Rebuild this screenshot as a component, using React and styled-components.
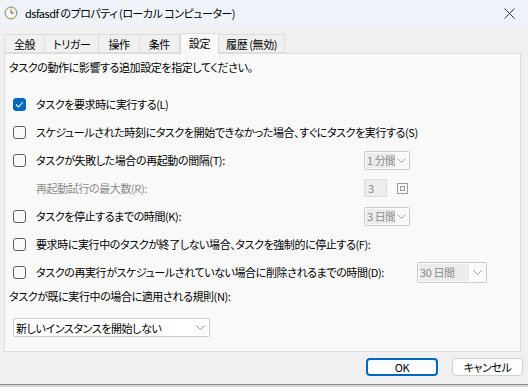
import React from "react";
import styled, { createGlobalStyle } from "styled-components";

const GlobalStyle = createGlobalStyle`
  html, body {
    margin: 0;
    padding: 0;
    background: #d6d6d6;
  }
  body {
    font-family: "Noto Sans CJK JP", "Noto Sans", sans-serif;
    font-size: 11px;
    font-feature-settings: "palt";
    letter-spacing: -0.4px;
    color: #000;
  }
`;

const tabs = ["全般", "トリガー", "操作", "条件", "設定", "履歴 (無効)"];

const Window = styled.div`
  width: 528px;
  height: 384px;
  background: #f0f0f0;
  border-bottom: 1px solid #8c8c8c;
  display: flex;
  flex-direction: column;
  overflow: hidden;
`;

const TitleBar = styled.div`
  height: 26px;
  background: #eef3fa;
  display: flex;
  align-items: center;
  padding-left: 4px;
  font-size: 11px;
`;

const Title = styled.span`
  margin-left: 7px;
  flex: 1;
  white-space: nowrap;
  letter-spacing: -0.5px;
`;

const CloseButton = styled.div`
  width: 30px;
  display: flex;
  justify-content: center;
  margin-right: 4px;
`;

const Tabs = styled.div`
  display: flex;
  align-items: flex-end;
  margin: 7px 0 0 4px;
  height: 20px;
  position: relative;
  z-index: 1;
`;

const Tab = styled.div`
  height: ${(p) => (p.$active ? "21px" : "19px")};
  margin-bottom: ${(p) => (p.$active ? "-1px" : "0")};
  padding: 0 ${(p) => p.$pad}px;
  display: flex;
  align-items: center;
  box-sizing: border-box;
  background: ${(p) => (p.$active ? "#f9f9f9" : "#f0f0f0")};
  border: 1px solid #dddddd;
  border-bottom: ${(p) => (p.$active ? "none" : "1px solid #dddddd")};
  border-left: ${(p) => (p.$first || p.$active ? "1px solid #dddddd" : "none")};
  white-space: nowrap;
  padding-bottom: ${(p) => (p.$active ? "2px" : "0")};
`;

const Panel = styled.div`
  margin: 0 7px 0 4px;
  height: 299px;
  box-sizing: border-box;
  background: #f9f9f9;
  border: 1px solid #dddddd;
  padding: 5px 8px 0 8px;
`;

const Description = styled.div`
  line-height: 16px;
  margin-left: -4px;
`;

const OptionList = styled.div`
  margin-top: 15px;
  display: flex;
  flex-direction: column;
`;

const OptionRow = styled.div`
  height: 28px;
  display: flex;
  align-items: center;
`;

const LabelArea = styled.div`
  display: flex;
  align-items: center;
  flex: 0 0 ${(p) => (p.$width ? `${p.$width}px` : "auto")};
  white-space: nowrap;
`;

const Box = styled.span`
  width: 13px;
  height: 13px;
  box-sizing: border-box;
  border-radius: 3px;
  border: 1px solid ${(p) => (p.$checked ? "#0067c0" : "#5f5f5f")};
  background: ${(p) => (p.$checked ? "#0067c0" : "#f9f9f9")};
  display: flex;
  align-items: center;
  justify-content: center;
  margin-right: 10px;
  flex: none;
`;

const Label = styled.span`
  color: ${(p) => (p.$disabled ? "#8b8b8b" : "#000")};
  margin-left: ${(p) => (p.$indent ? "23px" : "0")};
`;

const Combo = styled.div`
  width: ${(p) => p.$width}px;
  height: ${(p) => p.$height || 19}px;
  box-sizing: border-box;
  border: 1px solid #cccccc;
  background: ${(p) => (p.$enabled ? "#ffffff" : "#fbfbfb")};
  display: flex;
  align-items: center;
  padding: 1px;
  border-radius: 2px;
`;

const ComboText = styled.span`
  flex: 0 0 ${(p) => p.$width}px;
  height: 100%;
  overflow: hidden;
  white-space: nowrap;
  background: ${(p) => (p.$enabled ? "transparent" : "#ececec")};
  color: ${(p) => (p.$enabled ? "#000" : "#8b8b8b")};
  display: flex;
  align-items: center;
  padding-left: 1px;
`;

const Chevron = styled.span`
  flex: 1;
  display: flex;
  justify-content: center;
`;

const Spin = styled.div`
  width: 23px;
  height: 18px;
  box-sizing: border-box;
  border: 1px solid #dcdcdc;
  background: #ededed;
  color: #8b8b8b;
  display: flex;
  align-items: center;
  padding-left: 3px;
`;

const SpinIcon = styled.span`
  margin-left: 10px;
  display: flex;
`;

const RuleLabel = styled.div`
  line-height: 16px;
  margin: 2px 0 0 -4px;
`;

const RuleSelect = styled.div`
  margin: 14px 0 0 0;
`;

const Footer = styled.div`
  display: flex;
  justify-content: flex-end;
  gap: 14px;
  padding: 6px 5px 0 0;
`;

const Button = styled.div`
  width: ${(p) => (p.$primary ? "72px" : "71px")};
  height: 18px;
  box-sizing: border-box;
  border-radius: 4px;
  background: #fdfdfd;
  border: ${(p) => (p.$primary ? "2px solid #0067c0" : "1px solid #d0d0d0")};
  display: flex;
  align-items: center;
  justify-content: center;
`;

const ChevronIcon = () => (
  <svg width="9" height="5" viewBox="0 0 9 5">
    <path d="M0.5 0.5 L4.5 4.5 L8.5 0.5" fill="none" stroke="#a0a0a0" strokeWidth="1" />
  </svg>
);

const ClockIcon = () => (
  <svg width="14" height="14" viewBox="0 0 14 14">
    <circle cx="7" cy="7" r="6" fill="#f3e3a6" stroke="#8a8a8a" strokeWidth="1" />
    <circle cx="7" cy="7" r="4.5" fill="#fdfdfd" />
    <path d="M7 3.5 V7 H9.8" fill="none" stroke="#555" strokeWidth="1" />
  </svg>
);

const CloseIcon = () => (
  <svg width="11" height="11" viewBox="0 0 11 11">
    <path d="M0.5 0.5 L10.5 10.5 M10.5 0.5 L0.5 10.5" stroke="#333" strokeWidth="1" />
  </svg>
);

const CheckIcon = () => (
  <svg width="9" height="7" viewBox="0 0 9 7">
    <path d="M1 3.5 L3.5 6 L8 1" fill="none" stroke="#ffffff" strokeWidth="1.1" />
  </svg>
);

const Check = ({ checked, children, width }) => (
  <LabelArea $width={width}>
    <Box $checked={checked}>{checked && <CheckIcon />}</Box>
    <Label>{children}</Label>
  </LabelArea>
);

const DropDown = ({ width, height, textWidth, text, enabled }) => (
  <Combo $width={width} $height={height} $enabled={enabled}>
    <ComboText $width={textWidth} $enabled={enabled}>
      {text}
    </ComboText>
    <Chevron>
      <ChevronIcon />
    </Chevron>
  </Combo>
);

const tabPads = [9, 8, 9, 9, 8, 7];

export default function App() {
  return (
    <>
      <GlobalStyle />
      <Window>
        <TitleBar>
          <ClockIcon />
          <Title>dsfasdf のプロパティ (ローカル コンピューター)</Title>
          <CloseButton>
            <CloseIcon />
          </CloseButton>
        </TitleBar>
        <Tabs>
          {tabs.map((t, i) => (
            <Tab key={t} $active={t === "設定"} $first={i === 0} $pad={tabPads[i]}>
              {t}
            </Tab>
          ))}
        </Tabs>
        <Panel>
          <Description>タスクの動作に影響する追加設定を指定してください。</Description>
          <OptionList>
            <OptionRow>
              <Check checked>タスクを要求時に実行する(L)</Check>
            </OptionRow>
            <OptionRow>
              <Check>スケジュールされた時刻にタスクを開始できなかった場合、すぐにタスクを実行する(S)</Check>
            </OptionRow>
            <OptionRow>
              <Check width={351}>タスクが失敗した場合の再起動の間隔(T):</Check>
              <DropDown width={46} textWidth={28} text="1 分間" />
            </OptionRow>
            <OptionRow>
              <LabelArea $width={351}>
                <Label $disabled $indent>
                  再起動試行の最大数(R):
                </Label>
              </LabelArea>
              <Spin>3</Spin>
              <SpinIcon>
                <svg width="11" height="11" viewBox="0 0 11 11">
                  <rect x="0.5" y="0.5" width="10" height="10" fill="none" stroke="#9a9a9a" />
                  <rect x="3.5" y="3.5" width="4" height="4" fill="none" stroke="#9a9a9a" />
                </svg>
              </SpinIcon>
            </OptionRow>
            <OptionRow>
              <Check width={351}>タスクを停止するまでの時間(K):</Check>
              <DropDown width={46} textWidth={28} text="3 日間" />
            </OptionRow>
            <OptionRow>
              <Check>要求時に実行中のタスクが終了しない場合、タスクを強制的に停止する(F):</Check>
            </OptionRow>
            <OptionRow>
              <Check width={404}>タスクの再実行がスケジュールされていない場合に削除されるまでの時間(D):</Check>
              <DropDown width={70} height={21} textWidth={49} text="30 日間" />
            </OptionRow>
          </OptionList>
          <RuleLabel>タスクが既に実行中の場合に適用される規則(N):</RuleLabel>
          <RuleSelect>
            <DropDown width={197} textWidth={176} text="新しいインスタンスを開始しない" enabled />
          </RuleSelect>
        </Panel>
        <Footer>
          <Button $primary>OK</Button>
          <Button>キャンセル</Button>
        </Footer>
      </Window>
    </>
  );
}
